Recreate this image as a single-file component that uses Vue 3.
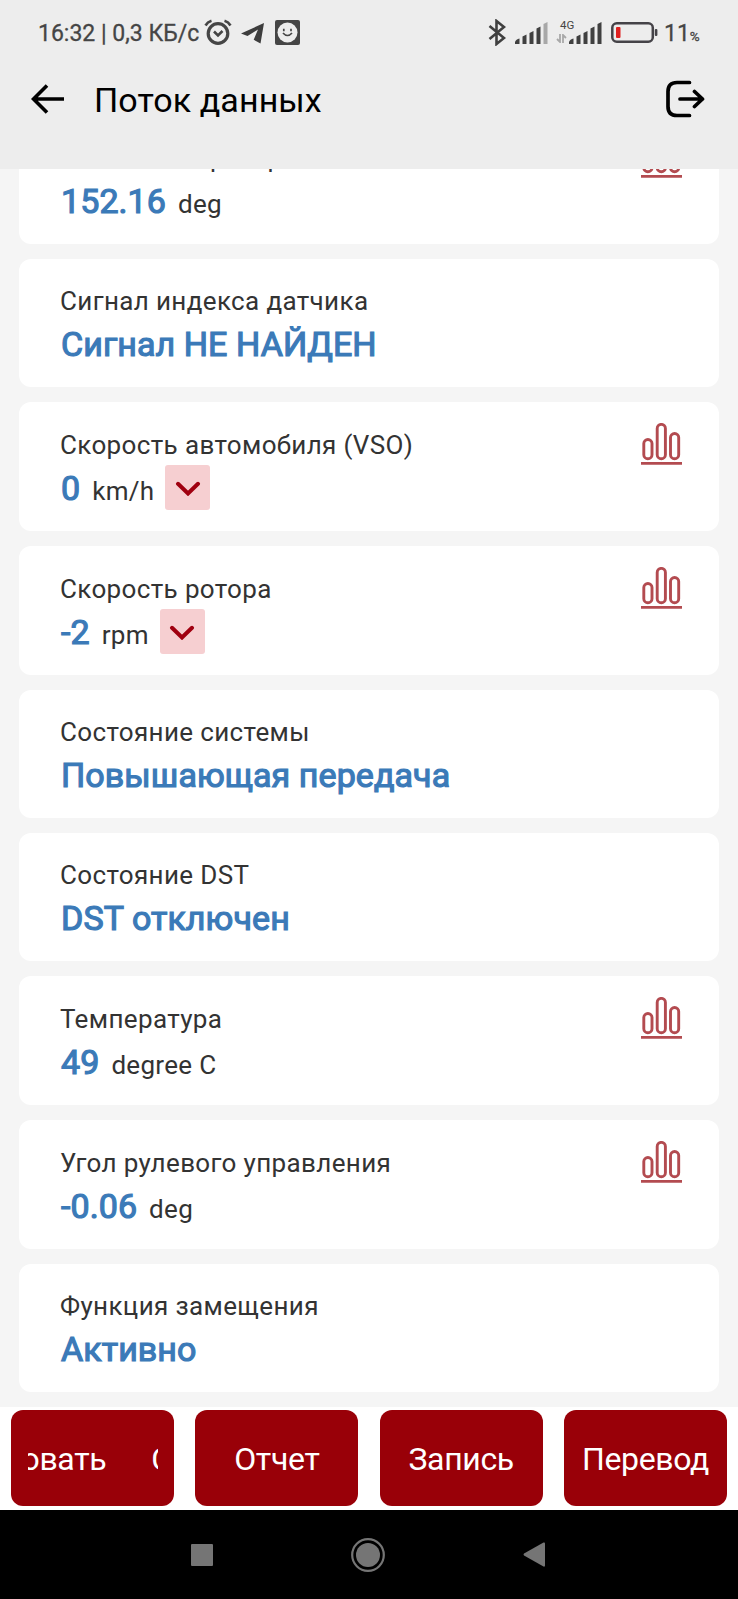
<template>
  <div class="screen">
    <header class="top">
      <!-- Системная строка -->
      <div class="status-bar">
        <span class="clock">16:32 | 0,3 КБ/с</span>
        <svg class="ic-alarm" width="28" height="26" viewBox="0 0 28 26" fill="none" stroke="#454545">
          <circle cx="14" cy="14.500" r="9.800" stroke-width="3.200" />
          <path d="M1.500 6.500Q3.500 3 7.500 1.800M26.500 6.500Q24.500 3 20.500 1.800" stroke-width="2.600" />
          <path d="M10 12.500l4 4 4.500-4.500" stroke-width="2.600" />
        </svg>
        <svg class="ic-telegram" width="23" height="21" viewBox="0 0 23 21" fill="#3d3d3d">
          <path d="M0 10.500L23 0l-3.500 20.500-6.800-3.700L17 6.500 6.500 13z" />
        </svg>
        <svg class="ic-face" width="25" height="25" viewBox="0 0 25 25" fill="none">
          <rect width="25" height="25" rx="2" fill="#454545" />
          <circle cx="12.500" cy="12.500" r="10" fill="#ededed" />
          <path d="M8.800 8.800v2.500M16 8.800v2.500M8 13q4.500 5 9 0" stroke="#454545" stroke-width="1.700" />
        </svg>

        <div class="status-right">
          <svg class="ic-bt" width="18" height="27" viewBox="0 0 18 27" fill="none" stroke="#404040" stroke-width="2.600">
            <path d="M1.500 7L16 19 8.500 25V2L16 8 1.500 20" />
          </svg>
          <svg class="ic-signal" width="34" height="22" viewBox="0 0 34 22" fill="#404040">
            <path v-for="(bar, i) in signalBars" :key="i" :d="bar" :opacity="i === 4 ? 0.4 : 1" />
          </svg>
          <div class="mobile">
            <span class="net">4G</span>
            <svg class="ic-data" width="11" height="9" viewBox="0 0 11 9" fill="none" stroke="#a8a8a8" stroke-width="1.800">
              <path d="M4 0v8L1 5M7 9V1l3 3" />
            </svg>
            <svg class="ic-signal" width="34" height="22" viewBox="0 0 34 22" fill="#404040">
              <path v-for="(bar, i) in signalBars" :key="i" :d="bar" />
            </svg>
          </div>
          <svg class="ic-battery" width="47" height="21" viewBox="0 0 47 21" fill="none">
            <rect x="1.300" y="1.300" width="40.500" height="18.400" rx="4.500" stroke="#454348" stroke-width="2.500" />
            <rect x="5" y="5" width="4.500" height="11" rx="1" fill="#e02020" />
            <rect x="43.800" y="7" width="2.600" height="7" rx="1" fill="#454348" />
          </svg>
          <span class="percent">11<small>%</small></span>
        </div>
      </div>

      <!-- Заголовок -->
      <div class="title-bar">
        <svg width="34" height="30" viewBox="0 0 34 30" fill="none" stroke="#000" stroke-width="3.600">
          <path d="M33 15H3M16 1.500L2.500 15 16 28.500" />
        </svg>
        <h1>Поток данных</h1>
        <svg class="exit" width="40" height="40" viewBox="0 0 40 40" fill="none" stroke="#000" stroke-width="3.700" stroke-linecap="round" stroke-linejoin="round">
          <path d="M24.500 3.500H12Q3 3.500 3 12.500V27.500Q3 36.500 12 36.500H24.500M15 20H37.500M29.500 12.500L37.500 20 29.500 27.500" />
        </svg>
      </div>
    </header>

    <!-- Список параметров -->
    <main class="list">
      <section v-for="item in items" :key="item.name" class="card" :class="{ numeric: item.unit }">
        <div class="info">
          <div class="name">{{ item.name }}</div>
          <div class="row">
            <span class="value">{{ item.value }}</span>
            <span v-if="item.unit" class="unit">{{ item.unit }}</span>
            <button v-if="item.select" class="select">
              <svg width="26" height="16" viewBox="0 0 26 16" fill="none" stroke="#a00010" stroke-width="4" stroke-linecap="round">
                <path d="M3 3.800L13 13.500 23 3.800" />
              </svg>
            </button>
          </div>
        </div>
        <svg v-if="item.unit" class="chart" width="41" height="42" viewBox="0 0 41 42" fill="none" stroke="#b34b50" stroke-width="2.900">
          <rect x="2.800" y="16.500" width="8.200" height="19.300" rx="4.100" />
          <rect x="16.200" y="1.400" width="8.200" height="34.400" rx="4.100" />
          <rect x="29.500" y="10.500" width="8.200" height="25.300" rx="4.100" />
          <path d="M0 40.400H41" />
        </svg>
      </section>
    </main>

    <!-- Нижние кнопки -->
    <footer class="actions">
      <button class="btn">
        <span class="marquee"><span class="run"><span>овать</span><span>С</span></span></span>
      </button>
      <button v-for="label in actions" :key="label" class="btn">{{ label }}</button>
    </footer>

    <nav class="nav-bar">
      <svg width="22" height="22" viewBox="0 0 22 22"><rect width="22" height="22" rx="1" fill="#757575" /></svg>
      <svg width="34" height="34" viewBox="0 0 34 34" fill="none">
        <circle cx="17" cy="17" r="15.800" stroke="#757575" stroke-width="2.200" />
        <circle cx="17" cy="17" r="12" fill="#757575" />
      </svg>
      <svg width="22" height="25" viewBox="0 0 22 25"><path d="M1 11.500L20.500 .5Q22 0 22 1.500V23.500Q22 25 20.500 24.500L1 13.500Q0 12.500 1 11.500z" fill="#757575" /></svg>
    </nav>
  </div>
</template>

<script setup>
import { ref } from 'vue'

// Столбики индикатора сигнала
const signalBars = [
  'M0 22v-2q1-3 4.500-3.500v5.500z',
  'M7.500 22v-7.500l4-2v9.500z',
  'M14.500 22v-11l4-2v13z',
  'M21.500 22v-15.500l4-2v17.500z',
  'M28.500 22v-20l4-2v22z'
]

// Параметры потока данных
const items = ref([
  { name: 'Положение ротора', value: '152.16', unit: 'deg' },
  { name: 'Сигнал индекса датчика', value: 'Сигнал НЕ НАЙДЕН' },
  { name: 'Скорость автомобиля (VSO)', value: '0', unit: 'km/h', select: true },
  { name: 'Скорость ротора', value: '-2', unit: 'rpm', select: true },
  { name: 'Состояние системы', value: 'Повышающая передача' },
  { name: 'Состояние DST', value: 'DST отключен' },
  { name: 'Температура', value: '49', unit: 'degree C' },
  { name: 'Угол рулевого управления', value: '-0.06', unit: 'deg' },
  { name: 'Функция замещения', value: 'Активно' }
])

const actions = ['Отчет', 'Запись', 'Перевод']
</script>

<style>
body {
  margin: 0;
}
</style>

<style scoped>
.screen {
  width: 738px;
  height: 1599px;
  display: flex;
  flex-direction: column;
  overflow: hidden;
  background: #f5f5f5;
  font-family: Roboto, "Liberation Sans", sans-serif;
}

.screen svg {
  display: block;
  flex: none;
}

.top {
  height: 169px;
  flex: none;
  background: #ededed;
}

.status-bar {
  display: flex;
  height: 64px;
  align-items: center;
  box-sizing: border-box;
  padding: 0 37px 0 38px;
  color: #454545;
}

.clock {
  width: 166px;
  padding-top: 2px;
  font-size: 23px;
  white-space: nowrap;
  -webkit-text-stroke: 0.3px #454545;
}

.ic-telegram {
  margin: 2px 0 0 9px;
}

.ic-face {
  margin-left: 11px;
}

.status-right {
  display: flex;
  align-items: center;
  margin-left: auto;
}

.ic-bt {
  margin-right: 9px;
}

.ic-signal {
  margin-top: 1px;
}

.mobile {
  position: relative;
  margin: 0 8px 0 20px;
}

.net {
  position: absolute;
  top: -2px;
  left: -9px;
  font-size: 11.5px;
  line-height: 13px;
}

.ic-data {
  position: absolute;
  left: -13px;
  bottom: 1px;
}

.percent {
  margin-left: 6px;
  padding-top: 2px;
  width: 37px;
  font-size: 23px;
  white-space: nowrap;
  -webkit-text-stroke: 0.3px #454545;
}

.percent small {
  font-size: 13.5px;
}

.title-bar {
  display: flex;
  height: 70px;
  align-items: center;
  padding: 0 33px 0 31px;
}

.title-bar h1 {
  margin: 2px 0 0 29px;
  font-size: 34px;
  font-weight: 400;
  letter-spacing: 0.1px;
  color: #000;
}

.exit {
  margin-left: auto;
}

.list {
  height: 1238px;
  flex: none;
  overflow: hidden;
  display: flex;
  flex-direction: column;
  justify-content: flex-end;
  gap: 15px;
  padding: 0 19px 15px;
  box-sizing: border-box;
}

.card {
  display: flex;
  flex: none;
  justify-content: space-between;
  height: 128px;
  box-sizing: border-box;
  padding: 0 37px 0 41px;
  background: #fff;
  border-radius: 12px;
}

.card.numeric {
  height: 129px;
}

.info {
  padding-top: 27px;
}

.numeric .info {
  padding-top: 28px;
}

.name {
  font-size: 26px;
  line-height: 30px;
  letter-spacing: 0.36px;
  color: #333;
  white-space: nowrap;
}

.row {
  display: flex;
  align-items: baseline;
  height: 45px;
  margin-top: 6px;
  line-height: 45px;
  white-space: nowrap;
}

.value {
  padding-left: 1px;
  font-size: 34px;
  letter-spacing: 0.08px;
  color: #3b7ab8;
  -webkit-text-stroke: 1.2px #3b7ab8;
}

.unit {
  margin-left: 12px;
  font-size: 26px;
  letter-spacing: 0.3px;
  color: #333;
}

.select {
  display: flex;
  align-self: flex-start;
  align-items: center;
  justify-content: center;
  width: 45px;
  height: 45px;
  margin: -1px 0 0 11px;
  padding: 0;
  border: none;
  border-radius: 3px;
  background: #f6cfd1;
}

.chart {
  margin-top: 21px;
}

.actions {
  display: grid;
  grid-template-columns: repeat(4, 163px);
  justify-content: space-between;
  flex: none;
  height: 103px;
  box-sizing: border-box;
  padding: 3px 11px 4px;
  background: #fff;
}

.btn {
  display: flex;
  align-items: center;
  justify-content: center;
  padding: 2px 0 0;
  border: none;
  border-radius: 12px;
  background: #990008;
  color: #fff;
  font-family: inherit;
  font-size: 32px;
  letter-spacing: -0.35px;
  white-space: nowrap;
}

.marquee {
  width: 130px;
  overflow: hidden;
}

.run {
  display: flex;
  gap: 45px;
  margin-left: -6px;
}

.nav-bar {
  display: flex;
  flex: 1;
  align-items: center;
  justify-content: space-between;
  padding: 0 193px 0 191px;
  background: #000;
}
</style>
